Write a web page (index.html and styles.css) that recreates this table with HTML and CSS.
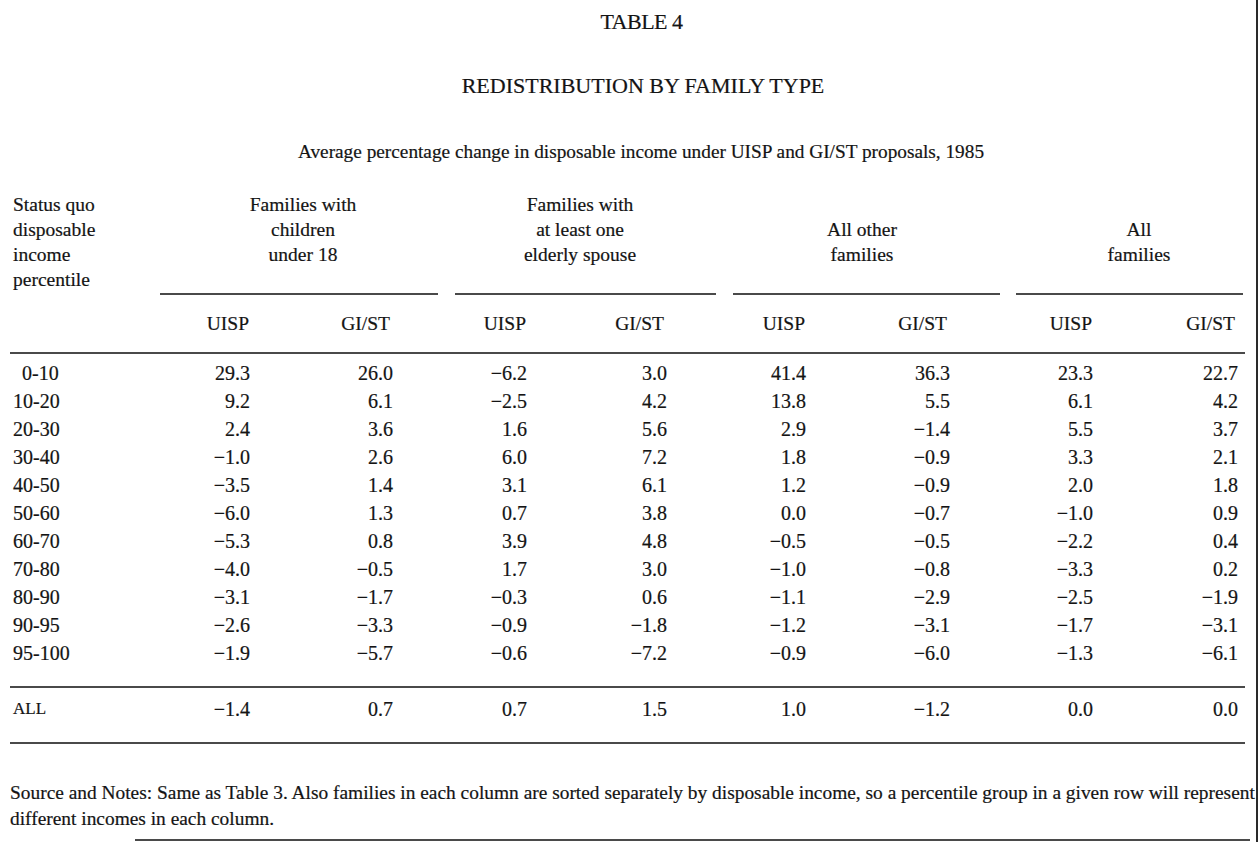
FILE: index.html
```html
<!DOCTYPE html>
<html lang="en">
<head>
<meta charset="utf-8">
<title>Table 4 — Redistribution by Family Type</title>
<link rel="stylesheet" href="styles.css">
</head>
<body>
<div class="page">
  <h1 class="title">TABLE 4</h1>
  <h2 class="heading">REDISTRIBUTION BY FAMILY TYPE</h2>
  <p class="subtitle">Average percentage change in disposable income under UISP and GI/ST proposals, 1985</p>

  <div class="group-head">
    <div class="stub">Status quo<br>disposable<br>income<br>percentile</div>
    <div class="group g1">Families with<br>children<br>under 18</div>
    <div class="group g2">Families with<br>at least one<br>elderly spouse</div>
    <div class="group g3">All other<br>families</div>
    <div class="group g4">All<br>families</div>
  </div>

  <div class="grid sub-head">
    <div></div>
    <div class="h">UISP</div><div class="h gi">GI/ST</div>
    <div class="h">UISP</div><div class="h gi">GI/ST</div>
    <div class="h">UISP</div><div class="h gi">GI/ST</div>
    <div class="h">UISP</div><div class="h gi">GI/ST</div>
  </div>

  <div class="grid body">
    <div class="lab ind">0-10</div><div>29.3</div><div>26.0</div><div>−6.2</div><div>3.0</div><div>41.4</div><div>36.3</div><div>23.3</div><div>22.7</div>
    <div class="lab">10-20</div><div>9.2</div><div>6.1</div><div>−2.5</div><div>4.2</div><div>13.8</div><div>5.5</div><div>6.1</div><div>4.2</div>
    <div class="lab">20-30</div><div>2.4</div><div>3.6</div><div>1.6</div><div>5.6</div><div>2.9</div><div>−1.4</div><div>5.5</div><div>3.7</div>
    <div class="lab">30-40</div><div>−1.0</div><div>2.6</div><div>6.0</div><div>7.2</div><div>1.8</div><div>−0.9</div><div>3.3</div><div>2.1</div>
    <div class="lab">40-50</div><div>−3.5</div><div>1.4</div><div>3.1</div><div>6.1</div><div>1.2</div><div>−0.9</div><div>2.0</div><div>1.8</div>
    <div class="lab">50-60</div><div>−6.0</div><div>1.3</div><div>0.7</div><div>3.8</div><div>0.0</div><div>−0.7</div><div>−1.0</div><div>0.9</div>
    <div class="lab">60-70</div><div>−5.3</div><div>0.8</div><div>3.9</div><div>4.8</div><div>−0.5</div><div>−0.5</div><div>−2.2</div><div>0.4</div>
    <div class="lab">70-80</div><div>−4.0</div><div>−0.5</div><div>1.7</div><div>3.0</div><div>−1.0</div><div>−0.8</div><div>−3.3</div><div>0.2</div>
    <div class="lab">80-90</div><div>−3.1</div><div>−1.7</div><div>−0.3</div><div>0.6</div><div>−1.1</div><div>−2.9</div><div>−2.5</div><div>−1.9</div>
    <div class="lab">90-95</div><div>−2.6</div><div>−3.3</div><div>−0.9</div><div>−1.8</div><div>−1.2</div><div>−3.1</div><div>−1.7</div><div>−3.1</div>
    <div class="lab">95-100</div><div>−1.9</div><div>−5.7</div><div>−0.6</div><div>−7.2</div><div>−0.9</div><div>−6.0</div><div>−1.3</div><div>−6.1</div>
  </div>

  <div class="grid total">
    <div class="lab">ALL</div><div>−1.4</div><div>0.7</div><div>0.7</div><div>1.5</div><div>1.0</div><div>−1.2</div><div>0.0</div><div>0.0</div>
  </div>

  <p class="note">Source and Notes: Same as Table 3. Also families in each column are sorted separately by disposable income, so a percentile group in a given row will represent<br>different incomes in each column.</p>
  <div class="bottom-rule"></div>
</div>
</body>
</html>
```

FILE: styles.css
```css
html, body {
  margin: 0;
  padding: 0;
  background: #ffffff;
  overflow: hidden;
}

.page {
  width: 1258px;
  height: 842px;
  padding: 9px 0 0 10px;
  box-sizing: border-box;
  border-right: 2px solid #2a2a2a;
  font-family: "Liberation Serif", "Times New Roman", serif;
  color: #141414;
  -webkit-text-stroke: 0.2px #141414;
  font-size: 20px;
}

.title {
  margin: 0;
  font-size: 22px;
  font-weight: normal;
  line-height: 26px;
  letter-spacing: -0.5px;
  text-align: center;
  padding-left: 17px;
}

.heading {
  margin: 38px 0 0;
  font-size: 22px;
  font-weight: normal;
  line-height: 26px;
  text-align: center;
  padding-left: 20px;
}

.subtitle {
  margin: 41px 0 0;
  font-size: 19.3px;
  line-height: 24px;
  text-align: center;
  padding-left: 16px;
}

.group-head {
  display: flex;
  align-items: stretch;
  margin-top: 28px;
  line-height: 25px;
  font-size: 19.5px;
}

.stub {
  width: 150px;
  flex: none;
  padding-left: 3px;
  box-sizing: border-box;
}

.group {
  flex: none;
  box-sizing: border-box;
  display: flex;
  flex-direction: column;
  justify-content: flex-end;
  text-align: center;
  padding-bottom: 26px;
  border-bottom: 2px solid #4a4a4a;
}

.g1 { width: 278px; padding-left: 8px; }
.g2 { width: 261px; margin-left: 17px; padding-right: 11px; }
.g3 { width: 267px; margin-left: 17px; padding-right: 9px; }
.g4 { width: 227px; margin-left: 16px; padding-left: 19px; }

.grid {
  display: grid;
  grid-template-columns: 150px 90px 143px 134px 140px 139px 144px 143px 145px;
  width: 1235px;
  border-bottom: 2px solid #4a4a4a;
}

.grid > div {
  text-align: right;
}

.grid > .lab {
  text-align: left;
  padding-left: 3px;
}

.grid > .ind {
  padding-left: 12px;
}

.sub-head {
  padding: 16px 0 16px;
  line-height: 25px;
  font-size: 19.5px;
}

.sub-head .h {
  padding-right: 1px;
}

.sub-head .gi {
  padding-right: 3px;
}

.body {
  padding: 5px 0 19px;
  line-height: 28px;
}

.total {
  padding: 7px 0 19px;
  line-height: 28px;
}

.total .lab {
  font-size: 17px;
}

.note {
  margin: 36px 0 0;
  font-size: 19.4px;
  line-height: 26px;
  white-space: nowrap;
}

.bottom-rule {
  margin: 7px 0 0 125px;
  width: 1115px;
  border-top: 2px solid #4a4a4a;
}
```
